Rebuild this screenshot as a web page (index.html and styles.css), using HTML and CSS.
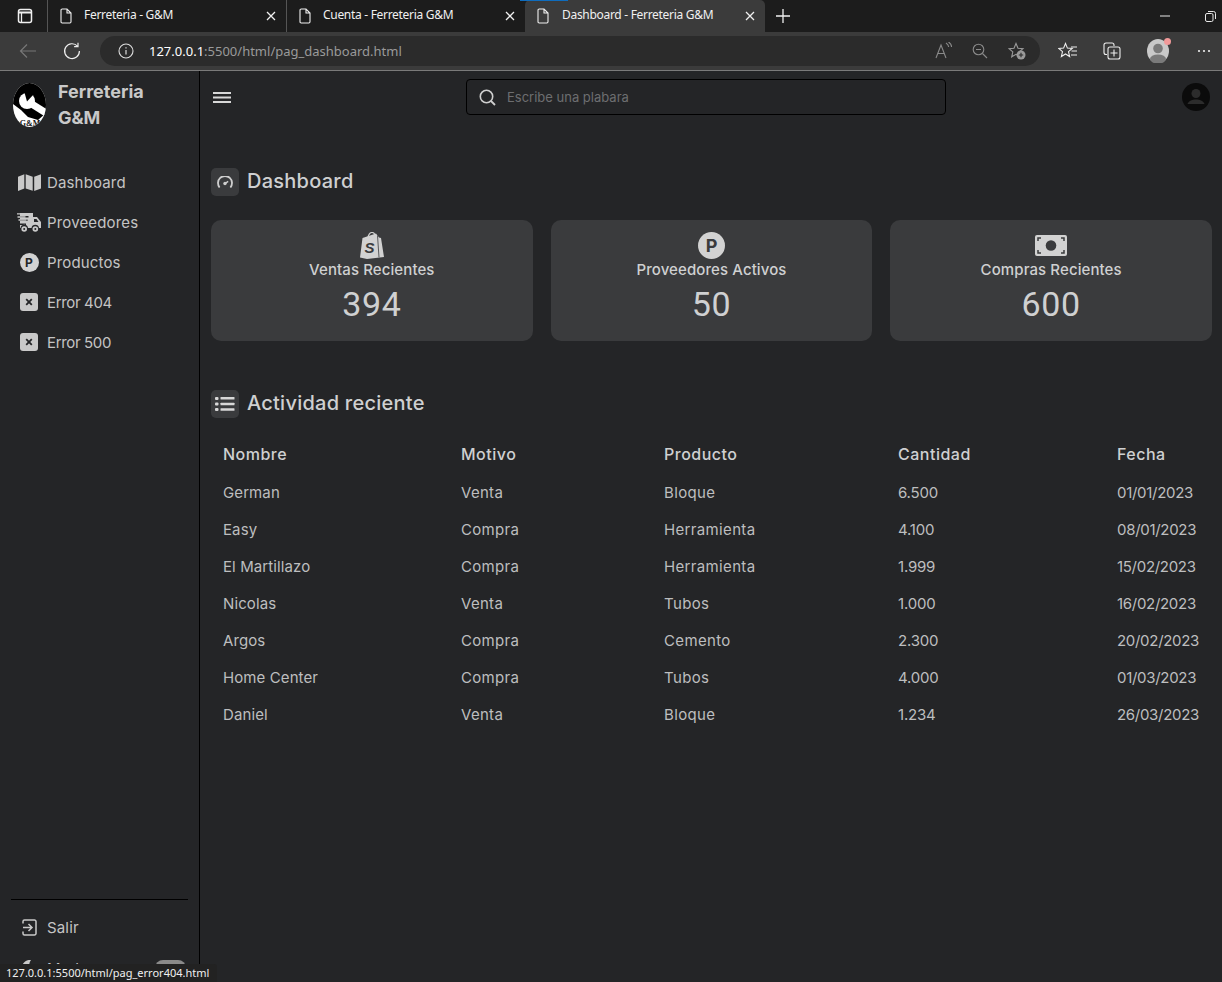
FILE: index.html
```html
<!DOCTYPE html>
<html lang="es">
<head>
<meta charset="utf-8">
<title>Dashboard - Ferreteria G&amp;M</title>
<link rel="stylesheet" href="styles.css">
</head>
<body>
<svg class="defs" width="0" height="0" aria-hidden="true">
  <symbol id="doc" viewBox="0 0 12 16"><path d="M1 2.200C1 1.500 1.500 1 2.200 1H7l4 4v8.800c0 .7-.5 1.200-1.200 1.200H2.200C1.500 15 1 14.500 1 13.800ZM7 1v4h4" fill="none" stroke="currentColor" stroke-width="1.100"/></symbol>
  <symbol id="close" viewBox="0 0 10 10"><path d="M1 1l8 8M9 1l-8 8" fill="none" stroke="currentColor" stroke-width="1.300"/></symbol>
  <symbol id="xsq" viewBox="0 0 18 18"><rect width="18" height="18" rx="3" fill="currentColor"/><path d="M6.200 6.200l5.600 5.600M11.800 6.200l-5.600 5.600" stroke="#242527" stroke-width="1.800"/></symbol>
</svg>

<div class="tabstrip">
  <svg class="tab-side" width="16" height="16" viewBox="0 0 16 16"><rect x="1.500" y="1.500" width="13" height="13" rx="2" fill="none" stroke="#f0f0f0" stroke-width="1.500"/><path d="M1.500 4.500h13" stroke="#f0f0f0" stroke-width="2"/><path d="M4.500 4.500v10" stroke="#f0f0f0" stroke-width="1.300"/></svg>
  <div class="tab">
    <svg class="tab-doc"><use href="#doc"/></svg><span class="tab-title">Ferreteria - G&amp;M</span><svg class="tab-close"><use href="#close"/></svg>
  </div>
  <div class="tab">
    <svg class="tab-doc"><use href="#doc"/></svg><span class="tab-title">Cuenta - Ferreteria G&amp;M</span><svg class="tab-close"><use href="#close"/></svg>
  </div>
  <div class="tab tab-active">
    <svg class="tab-doc"><use href="#doc"/></svg><span class="tab-title">Dashboard - Ferreteria G&amp;M</span><svg class="tab-close"><use href="#close"/></svg>
  </div>
  <svg class="tab-new" width="16" height="16" viewBox="0 0 16 16"><path d="M8 1v14M1 8h14" stroke="#f0f0f0" stroke-width="1.300"/></svg>
  <div class="win-controls">
    <svg width="10" height="10" viewBox="0 0 10 10"><path d="M0 5h10" stroke="#e8e8e8"/></svg>
    <svg width="11" height="11" viewBox="0 0 11 11"><rect x=".5" y="2.500" width="7.500" height="8" rx="1.500" fill="none" stroke="#e8e8e8"/><path d="M3 .5h5.500a2 2 0 0 1 2 2V8" fill="none" stroke="#e8e8e8"/></svg>
  </div>
</div>

<div class="toolbar">
  <svg class="tb-back" width="18" height="16" viewBox="0 0 18 16"><path d="M17 8H1.500M8 1.500L1.500 8 8 14.500" fill="none" stroke="#777" stroke-width="1.200"/></svg>
  <svg class="tb-reload" width="18" height="18" viewBox="0 0 18 18"><path d="M14.600 4.300A7.400 7.400 0 1 0 16.400 9M15 .8v3.900h-3.900" fill="none" stroke="#eee" stroke-width="1.200"/></svg>
  <div class="address">
    <svg class="addr-info" width="16" height="16" viewBox="0 0 16 16"><circle cx="8" cy="8" r="7" fill="none" stroke="#ddd" stroke-width="1.100"/><path d="M8 7v4.500M8 4.300v1.200" stroke="#ddd" stroke-width="1.200"/></svg>
    <span class="url"><span class="url-host">127.0.0.1</span>:5500/html/pag_dashboard.html</span>
    <div class="addr-actions">
      <svg width="17" height="17" viewBox="0 0 17 17"><path d="M1 16L6 3l5 13M2.800 11.500h6.400M11 1c1.600 1 2.500 2.300 2.700 4M13.500 0c1.900 1.200 3 3 3.100 5" fill="none" stroke="#8a8a8a" stroke-width="1.100"/></svg>
      <svg width="16" height="16" viewBox="0 0 16 16"><circle cx="6.500" cy="6.500" r="5.300" fill="none" stroke="#8a8a8a" stroke-width="1.100"/><path d="M10.500 10.500L15 15M4 6.500h5" fill="none" stroke="#8a8a8a" stroke-width="1.100"/></svg>
      <svg width="18" height="18" viewBox="0 0 18 18"><path d="M8 1.500l2 4.700 5 .4-3.800 3.300 1.100 4.900L8 12.300l-4.300 2.500 1.100-4.900L1 6.600l5-.4Z" fill="none" stroke="#9a9a9a" stroke-width="1.100"/><circle cx="13" cy="13" r="4.500" fill="#9a9a9a"/><path d="M13 10.800v4.400M10.800 13h4.400" stroke="#2b2b2b" stroke-width="1.100"/></svg>
    </div>
  </div>
  <div class="tb-actions">
    <svg width="20" height="18" viewBox="0 0 20 18"><path d="M7.500 1.500l1.900 4.600 4.800.4-3.700 3.200 1.100 4.800-4.100-2.500-4.100 2.500 1.100-4.800L.8 6.500l4.800-.4Z" fill="none" stroke="#eee" stroke-width="1.100"/><path d="M13 5h6M13.500 9H19M13 13h6" stroke="#eee" stroke-width="1.100"/></svg>
    <svg class="tb-coll" width="18" height="18" viewBox="0 0 18 18"><path d="M4 12.500H3a2 2 0 0 1-2-2V3a2 2 0 0 1 2-2h6a2 2 0 0 1 2 2v1" fill="none" stroke="#eee" stroke-width="1.100"/><rect x="5" y="5" width="12" height="12" rx="2" fill="none" stroke="#eee" stroke-width="1.100"/><path d="M11 7.500v7M7.500 11h7" stroke="#eee" stroke-width="1.100"/></svg>
    <div class="profile">
      <svg width="22" height="24" viewBox="0 0 22 24"><ellipse cx="11" cy="12" rx="11" ry="12" fill="#c9c9c9"/><circle cx="11" cy="9.500" r="4.800" fill="#7a7a7a"/><ellipse cx="11" cy="20" rx="8" ry="4.500" fill="#7a7a7a"/></svg>
      <span class="profile-dot"></span>
    </div>
    <svg class="tb-dots" width="14" height="4" viewBox="0 0 14 4"><circle cx="2" cy="2" r="1.100" fill="#eee"/><circle cx="7" cy="2" r="1.100" fill="#eee"/><circle cx="12" cy="2" r="1.100" fill="#eee"/></svg>
  </div>
</div>

<div class="app">
  <aside class="sidebar">
    <div class="brand">
      <svg class="brand-logo" width="33" height="44" viewBox="0 0 33 44">
        <clipPath id="logo-clip"><ellipse cx="16.500" cy="22" rx="16.500" ry="22"/></clipPath>
        <g clip-path="url(#logo-clip)">
          <rect width="33" height="44" fill="#fff"/>
          <path d="M0 21V0H33V30L25 37 15 34 8 27Z" fill="#000"/>
          <circle cx="14" cy="18" r="8" fill="#fff"/>
          <path d="M14 18L33 30" stroke="#fff" stroke-width="7"/>
          <path d="M14 18.500L10.500 6 22 6 21 11Z" fill="#000"/>
          <text class="brand-logo-text" x="17" y="42.500" text-anchor="middle">G&amp;M</text>
        </g>
      </svg>
      <div class="brand-name">Ferreteria G&amp;M</div>
    </div>
    <nav class="nav">
      <a class="nav-item">
        <span class="nav-icon"><svg width="23" height="17" viewBox="0 0 23 17"><path d="M0 2.800L6.300 .3V14.500L0 17ZM7.700 .3l7 2.500V16.800l-7-2.300ZM16.200 2.800L23 .3V14.500L16.200 17Z" fill="currentColor"/></svg></span>
        <span>Dashboard</span>
      </a>
      <a class="nav-item">
        <span class="nav-icon"><svg width="25" height="21" viewBox="0 0 25 21"><path d="M3 1h13v4h4l4 5v6h-2a3.800 3.800 0 0 0-7.500 0H11a3.800 3.800 0 0 0-7.500 0H3v-3h6v-1.500H3V9h7.500V7.500H3v-2h8.500V4H3Z" fill="currentColor"/><path d="M0 1.800h8M.5 5h8M1.500 8h8" stroke="currentColor" stroke-width="1.300"/><circle cx="7.200" cy="17" r="2.800" fill="currentColor"/><circle cx="18.300" cy="17" r="2.800" fill="currentColor"/><circle cx="7.200" cy="17" r="1" fill="#242527"/><circle cx="18.300" cy="17" r="1" fill="#242527"/><path d="M17 7h2.500l2 3H17Z" fill="#242527"/></svg></span>
        <span>Proveedores</span>
      </a>
      <a class="nav-item">
        <span class="nav-icon"><span class="p-badge p-badge-sm">P</span></span>
        <span>Productos</span>
      </a>
      <a class="nav-item">
        <span class="nav-icon"><svg class="xsq"><use href="#xsq"/></svg></span>
        <span class="nav-num">Error 404</span>
      </a>
      <a class="nav-item">
        <span class="nav-icon"><svg class="xsq"><use href="#xsq"/></svg></span>
        <span class="nav-num">Error 500</span>
      </a>
    </nav>
    <div class="side-bottom">
      <a class="nav-item">
        <span class="nav-icon"><svg width="15" height="17" viewBox="0 0 15 17"><path d="M1 4.500V2.500A1.500 1.500 0 0 1 2.500 1h10A1.500 1.500 0 0 1 14 2.500v12a1.500 1.500 0 0 1-1.500 1.500h-10A1.500 1.500 0 0 1 1 14.500v-2M1 8.500h8.500M6.500 5l3.500 3.500L6.500 12" fill="none" stroke="currentColor" stroke-width="1.500"/></svg></span>
        <span>Salir</span>
      </a>
      <div class="nav-item mode-row">
        <span class="nav-icon"><svg width="14" height="16" viewBox="0 0 14 16"><path d="M9 0a8 8 0 1 0 5 13A8 8 0 0 1 9 0Z" fill="currentColor"/></svg></span>
        <span>Modo oscuro</span>
        <span class="mode-toggle"></span>
      </div>
    </div>
  </aside>

  <main class="main">
    <header class="topbar">
      <svg class="burger" width="18" height="11" viewBox="0 0 18 11"><path d="M0 1h18M0 5.500h18M0 10h18" stroke="#d8d8d8" stroke-width="2"/></svg>
      <div class="search">
        <svg width="17" height="17" viewBox="0 0 17 17"><circle cx="7.500" cy="7.500" r="6.200" fill="none" stroke="#cfcfcf" stroke-width="1.600"/><path d="M12 12l4 4" stroke="#cfcfcf" stroke-width="1.800"/></svg>
        <span class="search-text">Escribe una plabara</span>
      </div>
      <svg class="avatar" width="28" height="28" viewBox="0 0 28 28"><circle cx="14" cy="14" r="14" fill="#0b0b0b"/><circle cx="14" cy="10.500" r="4.500" fill="#2c2c2c"/><path d="M5.500 21c1.500-3.500 5-4.500 8.500-4.500s7 1 8.500 4.500Z" fill="#2c2c2c"/></svg>
    </header>

    <section class="content">
      <h2 class="section-title">
        <span class="title-icon"><svg width="16" height="12" viewBox="0 0 16 12"><path d="M2.600 11.500A7 7 0 1 1 13.400 11.500" fill="none" stroke="#cfcfcf" stroke-width="1.800"/><circle cx="8" cy="7.500" r="1.700" fill="#cfcfcf"/><path d="M8 7.500l3.200-2.200" stroke="#cfcfcf" stroke-width="1.400"/></svg></span>
        <span class="title-text">Dashboard</span>
      </h2>

      <div class="cards">
        <article class="card">
          <svg class="card-icon" width="24" height="27" viewBox="0 0 24 27"><path d="M2.500 6L16 1.600 19 5.500 21 6l3 19-17 2L0 25.500Z" fill="#d2d2d2"/><path d="M8 6c0-3 2-5.500 4-5.500s3 2 3 4.500" fill="none" stroke="#d2d2d2" stroke-width="1.200"/><path d="M17.500 3.500l1.500 21.800" stroke="#3a3b3d" stroke-width=".8"/><text class="shop-s" x="9.500" y="21" text-anchor="middle">S</text></svg>
          <div class="card-label">Ventas Recientes</div>
          <div class="card-value">394</div>
        </article>
        <article class="card">
          <span class="p-badge p-badge-lg card-icon">P</span>
          <div class="card-label">Proveedores Activos</div>
          <div class="card-value">50</div>
        </article>
        <article class="card">
          <svg class="card-icon" width="32" height="27" viewBox="0 0 32 27"><rect y="3" width="32" height="21" rx="2" fill="#d2d2d2"/><circle cx="16" cy="13.500" r="5.300" fill="#3a3b3d"/><path d="M3 9V6h3M29 9V6h-3M3 18v3h3M29 18v3h-3" fill="none" stroke="#3a3b3d" stroke-width="1.500"/></svg>
          <div class="card-label">Compras Recientes</div>
          <div class="card-value">600</div>
        </article>
      </div>

      <h2 class="section-title section-title-activity">
        <span class="title-icon"><svg width="20" height="16" viewBox="0 0 20 16"><g fill="#d8d8d8"><rect y="1" width="3.500" height="3" rx="1"/><rect y="6.500" width="3.500" height="3" rx="1"/><rect y="12" width="3.500" height="3" rx="1"/><rect x="5.500" y="1" width="14" height="2.600" rx=".6"/><rect x="5.500" y="6.700" width="14" height="2.600" rx=".6"/><rect x="5.500" y="12.200" width="14" height="2.600" rx=".6"/></g></svg></span>
        <span class="title-text">Actividad reciente</span>
      </h2>

      <table class="activity">
        <colgroup><col class="c1"><col class="c2"><col class="c3"><col class="c4"><col class="c5"></colgroup>
        <thead>
          <tr><th>Nombre</th><th>Motivo</th><th>Producto</th><th>Cantidad</th><th>Fecha</th></tr>
        </thead>
        <tbody>
          <tr><td>German</td><td>Venta</td><td>Bloque</td><td>6.500</td><td>01/01/2023</td></tr>
          <tr><td>Easy</td><td>Compra</td><td>Herramienta</td><td>4.100</td><td>08/01/2023</td></tr>
          <tr><td>El Martillazo</td><td>Compra</td><td>Herramienta</td><td>1.999</td><td>15/02/2023</td></tr>
          <tr><td>Nicolas</td><td>Venta</td><td>Tubos</td><td>1.000</td><td>16/02/2023</td></tr>
          <tr><td>Argos</td><td>Compra</td><td>Cemento</td><td>2.300</td><td>20/02/2023</td></tr>
          <tr><td>Home Center</td><td>Compra</td><td>Tubos</td><td>4.000</td><td>01/03/2023</td></tr>
          <tr><td>Daniel</td><td>Venta</td><td>Bloque</td><td>1.234</td><td>26/03/2023</td></tr>
        </tbody>
      </table>
    </section>
  </main>
</div>

<div class="status-bubble">127.0.0.1:5500/html/pag_error404.html</div>
</body>
</html>
```

FILE: styles.css
```css
* { box-sizing: border-box; }
html, body { margin: 0; height: 100%; }
body {
  position: relative;
  display: flex;
  flex-direction: column;
  height: 982px;
  overflow: hidden;
  background: #242527;
  font-family: "Inter", "Liberation Sans", sans-serif;
  color: #cfd0d1;
}
.defs { position: absolute; }

/* Browser chrome */
.tabstrip {
  flex: none;
  display: flex;
  align-items: stretch;
  height: 32px;
  background: #1c1c1c;
  font-family: "Noto Sans", sans-serif;
  font-size: 12px;
  color: #f0f0f0;
}
.tab-side { align-self: center; margin: 0 14px 0 17px; flex: none; }
.tab {
  position: relative;
  flex: none;
  display: flex;
  align-items: center;
  width: 239px;
  padding: 0 10px 0 12px;
  border-left: 1px solid #555;
}
.tab-active {
  width: 240px;
  border-left: 0;
  background: #3b3b3b;
  border-radius: 5px 5px 0 0;
}
.tab-active::before {
  content: "";
  position: absolute;
  left: -5px;
  top: 0;
  width: 48px;
  height: 1px;
  background: #0f6cbd;
}
.tab-doc { width: 12px; height: 16px; flex: none; margin-right: 12px; }
.tab-title { flex: 1; white-space: nowrap; letter-spacing: -0.3px; line-height: 16px; margin-top: -2px; }
.tab-active .tab-title { margin-left: 1px; }
.tab-close { width: 10px; height: 10px; flex: none; }
.tab-new { align-self: center; margin-left: 10px; flex: none; }
.win-controls {
  margin-left: auto;
  display: flex;
  align-items: center;
  gap: 35px;
  padding-right: 6px;
}

.toolbar {
  flex: none;
  display: flex;
  align-items: center;
  height: 39px;
  padding: 0 0 1px 19px;
  background: #3b3b3b;
  border-bottom: 1px solid #7a7a7a;
}
.tb-reload { margin-left: 26px; }
.address {
  display: flex;
  align-items: center;
  width: 940px;
  height: 30px;
  margin-left: 19px;
  padding: 0 14px 0 18px;
  background: #2b2b2b;
  border-radius: 15px;
  font-family: "Noto Sans", sans-serif;
  font-size: 13px;
  color: #9a9a9a;
}
.url { margin-left: 15px; }
.url-host { color: #fff; }
.addr-actions {
  margin-left: auto;
  display: flex;
  align-items: center;
  gap: 20px;
}
.tb-actions {
  display: flex;
  align-items: center;
  gap: 24px;
  margin-left: 18px;
}
.tb-coll { margin-left: 1px; }
.tb-dots { margin-left: 4px; }
.profile { position: relative; height: 24px; margin-left: 2px; }
.profile-dot {
  position: absolute;
  top: -1px;
  right: -2px;
  width: 7px;
  height: 7px;
  border-radius: 50%;
  background: #f19a9a;
}

/* App */
.app { flex: 1; display: flex; min-height: 0; }
.sidebar {
  flex: none;
  display: flex;
  flex-direction: column;
  width: 200px;
  height: 100%;
  padding: 12px 11px 0 13px;
  border-right: 1px solid #000;
}
.brand { display: flex; align-items: flex-start; gap: 12px; height: 71px; }
.brand-logo { flex: none; }
.brand-logo-text { font: 700 8px "Liberation Serif", serif; fill: #111; }
.shop-s { font: italic 700 15px "Liberation Sans", sans-serif; fill: #3a3b3d; }
.brand-name {
  font-size: 18px;
  font-weight: 700;
  line-height: 26px;
  margin-top: -4px;
  color: #c9c9c9;
  width: 110px;
}
.nav { display: flex; flex-direction: column; margin-left: -2px; margin-top: 8px; }
.nav-item {
  display: flex;
  align-items: center;
  height: 40px;
  font-size: 15px;
  letter-spacing: .15px;
  color: #c4c4c4;
  white-space: nowrap;
}
.nav-num { letter-spacing: -.35px; }
.nav-icon {
  flex: none;
  display: flex;
  align-items: center;
  justify-content: center;
  width: 36px;
  color: #c9c9c9;
}
.xsq { width: 18px; height: 18px; }
.p-badge {
  display: flex;
  align-items: center;
  justify-content: center;
  border-radius: 50%;
  background: #d2d2d2;
  font-family: "Inter", sans-serif;
  font-weight: 700;
}
.p-badge-sm { width: 19px; height: 19px; font-size: 12px; color: #242527; }
.p-badge-lg { width: 27px; height: 27px; font-size: 18px; color: #3a3b3d; }

.side-bottom {
  margin-top: auto;
  margin-left: -2px;
  padding-top: 7px;
  border-top: 1px solid #000;
  height: 83px;
}
.mode-row { position: relative; margin-top: 1px; }
.mode-toggle {
  position: absolute;
  left: 144px;
  top: 12px;
  width: 31px;
  height: 16px;
  border-radius: 8px;
  background: #8a8a8a;
}

.main { flex: 1; min-width: 0; }
.topbar {
  display: flex;
  align-items: center;
  height: 52px;
  padding: 0 12px 0 13px;
}
.burger { flex: none; }
.search {
  display: flex;
  align-items: center;
  gap: 11px;
  width: 480px;
  height: 36px;
  margin-left: 235px;
  padding-left: 12px;
  border: 1px solid #000;
  border-radius: 4px;
  font-size: 13px;
  color: #6d6e70;
}
.search-text { margin-top: -1px; }
.avatar { margin-left: auto; }
.content { padding: 45px 10px 0 11px; }
.section-title {
  display: flex;
  align-items: center;
  gap: 8px;
  margin: 0;
  height: 28px;
  font-size: 20px;
  font-weight: 500;
  letter-spacing: .25px;
  color: #cfd0d1;
}
.title-text { margin-top: -2px; }
.title-icon {
  display: flex;
  align-items: center;
  justify-content: center;
  width: 28px;
  height: 28px;
  border-radius: 5px;
  background: #3a3b3d;
}
.cards {
  display: grid;
  grid-template-columns: repeat(3, 1fr);
  gap: 18px;
  margin-top: 24px;
}
.card {
  display: flex;
  flex-direction: column;
  align-items: center;
  height: 121px;
  padding-top: 12px;
  border-radius: 10px;
  background: #3a3b3d;
}
.card-icon { flex: none; }
.card-label { margin-top: 1px; font-size: 15px; font-weight: 500; line-height: 20px; letter-spacing: .1px; color: #cfd0d1; }
.card-value { font-family: "Roboto", sans-serif; font-size: 34px; font-weight: 400; line-height: 40px; margin-top: 4px; letter-spacing: .6px; color: #cfd0d1; }
.section-title-activity { margin-top: 49px; }
.activity {
  width: 1001px;
  margin-top: 17px;
  border-collapse: collapse;
  table-layout: fixed;
  font-size: 15px;
}
.c1 { width: 238px; } .c2 { width: 203px; } .c3 { width: 234px; } .c4 { width: 219px; }
.activity th, .activity td { padding: 0 0 0 12px; text-align: left; white-space: nowrap; }
.activity th { height: 39px; padding-bottom: 2px; font-size: 16px; font-weight: 500; letter-spacing: .5px; color: #cfd0d1; }
.activity td { height: 37px; color: #bdbebf; }
.activity td:nth-child(1) { letter-spacing: .1px; }
.activity td:nth-child(2) { letter-spacing: .3px; }
.activity td:nth-child(3) { letter-spacing: .35px; }
.activity td:nth-child(4) { letter-spacing: -.2px; }
.activity td:nth-child(5) { letter-spacing: -.3px; }

.status-bubble {
  position: absolute;
  left: 0;
  bottom: 0;
  width: 217px;
  height: 18px;
  padding-left: 6px;
  background: #222;
  border-radius: 0 3px 0 0;
  font-family: "Noto Sans", sans-serif;
  font-size: 11px;
  line-height: 17px;
  color: #f0f0f0;
  white-space: nowrap;
  overflow: hidden;
}
```
